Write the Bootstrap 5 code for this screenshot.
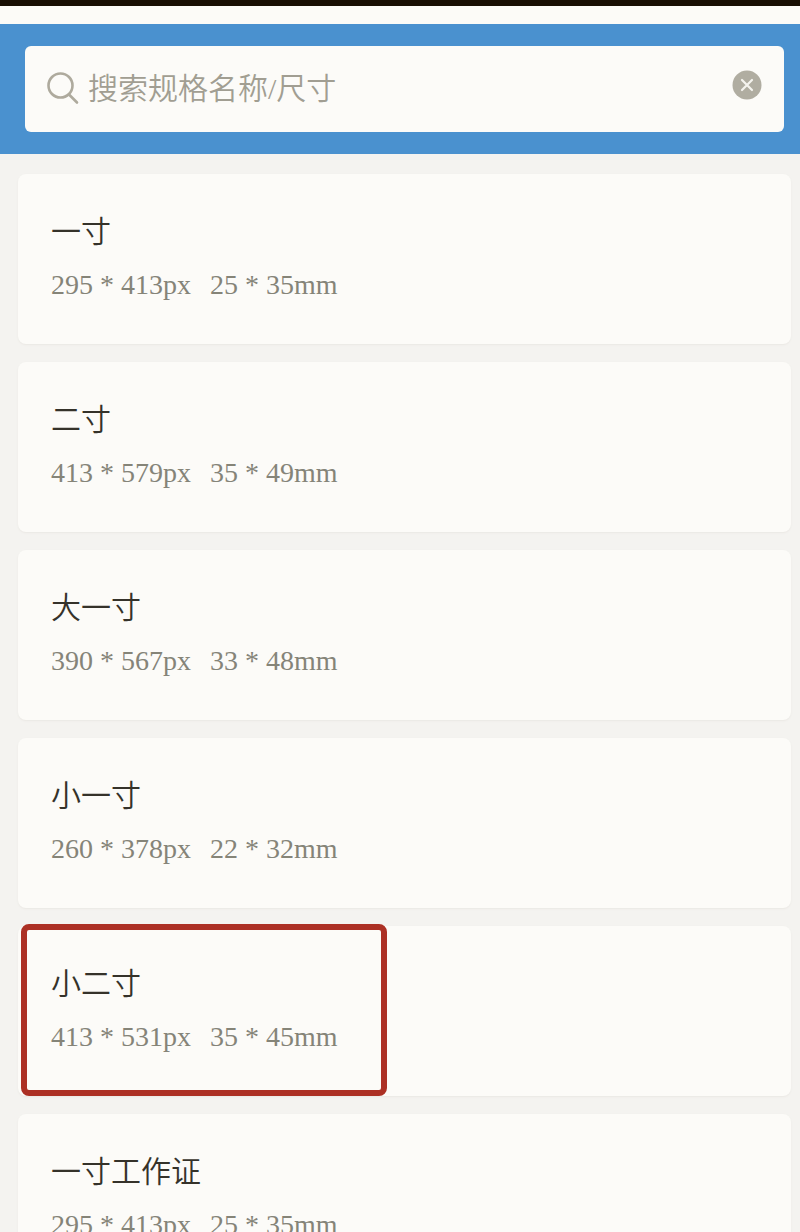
<!DOCTYPE html>
<html lang="zh-CN">
<head>
<meta charset="utf-8">
<meta name="viewport" content="width=device-width, initial-scale=1">
<title>规格搜索</title>
<link href="https://cdn.jsdelivr.net/npm/bootstrap@5.3.0/dist/css/bootstrap.min.css" rel="stylesheet">
<style>
  body { background: #f4f3f0; font-family: "Liberation Serif", "Noto Sans CJK SC", serif; }
  .status-strip { height: 24px; background: #fcfbf7; border-top: 6px solid #190f03; }
  .search-bar { background: #4a91cf; padding: 22px 16px 22px 25px; }
  .search-box { height: 86px; background: #fcfbf8; border-radius: 6px; padding: 0 22px; }
  .search-box .form-control { font-size: 30px; line-height: 44px; font-weight: 350; color: #3d3a30; padding: 0 8px 0 9px; }
  .search-box .form-control::placeholder { color: #a19e92; opacity: 1; }
  .size-list { gap: 18px; padding: 20px 9px 20px 18px; scrollbar-width: none; }
  .size-card { min-height: 170px; background: #fcfbf8; border-radius: 8px; padding: 34px 33px; box-shadow: 0 1px 2px #eae8e4; }
  .size-name { font-size: 30px; line-height: 48px; font-weight: 350; color: #35322a; }
  .size-spec { font-size: 28px; line-height: 32px; margin-top: 13px; gap: 19px; color: #858478; }
  .picked-frame { top: -2px; bottom: 0; left: 3px; width: 366px; border: 6px solid #ac3024; border-radius: 8px; }
</style>
</head>
<body class="vh-100 overflow-hidden d-flex flex-column">
<header class="flex-shrink-0">
  <div class="status-strip"></div>
  <form class="search-bar" role="search">
    <div class="search-box d-flex align-items-center">
      <label for="q" class="flex-shrink-0 d-flex" aria-label="搜索">
        <svg width="32" height="34" viewBox="0 0 32 34" fill="none" stroke="#aeaa9d" stroke-width="2.6" stroke-linecap="round"><circle cx="13.5" cy="13.5" r="12"/><path d="M22 22.500 30 30.500"/></svg>
      </label>
      <input id="q" type="text" class="form-control border-0 bg-transparent shadow-none" placeholder="搜索规格名称/尺寸">
      <button type="reset" class="btn d-flex border-0 p-0 pb-2 flex-shrink-0" aria-label="清除">
        <svg width="30" height="30" viewBox="0 0 30 30"><circle cx="15" cy="15" r="14.5" fill="#b0ada1"/><path d="M10 10 20 20M20 10 10 20" stroke="#f4f3ee" stroke-width="2.2" stroke-linecap="round"/></svg>
      </button>
    </div>
  </form>
</header>
<main class="size-list flex-fill overflow-auto d-flex flex-column">
  <article class="size-card flex-shrink-0">
    <h2 class="size-name mb-0">一寸</h2>
    <div class="size-spec d-flex"><span>295 * 413px</span><span>25 * 35mm</span></div>
  </article>
  <article class="size-card flex-shrink-0">
    <h2 class="size-name mb-0">二寸</h2>
    <div class="size-spec d-flex"><span>413 * 579px</span><span>35 * 49mm</span></div>
  </article>
  <article class="size-card flex-shrink-0">
    <h2 class="size-name mb-0">大一寸</h2>
    <div class="size-spec d-flex"><span>390 * 567px</span><span>33 * 48mm</span></div>
  </article>
  <article class="size-card flex-shrink-0">
    <h2 class="size-name mb-0">小一寸</h2>
    <div class="size-spec d-flex"><span>260 * 378px</span><span>22 * 32mm</span></div>
  </article>
  <article class="size-card flex-shrink-0 position-relative">
    <h2 class="size-name mb-0">小二寸</h2>
    <div class="size-spec d-flex"><span>413 * 531px</span><span>35 * 45mm</span></div>
    <div class="picked-frame position-absolute"></div>
  </article>
  <article class="size-card flex-shrink-0">
    <h2 class="size-name mb-0">一寸工作证</h2>
    <div class="size-spec d-flex"><span>295 * 413px</span><span>25 * 35mm</span></div>
  </article>
</main>
<script src="https://cdn.jsdelivr.net/npm/bootstrap@5.3.0/dist/js/bootstrap.bundle.min.js"></script>
</body>
</html>
